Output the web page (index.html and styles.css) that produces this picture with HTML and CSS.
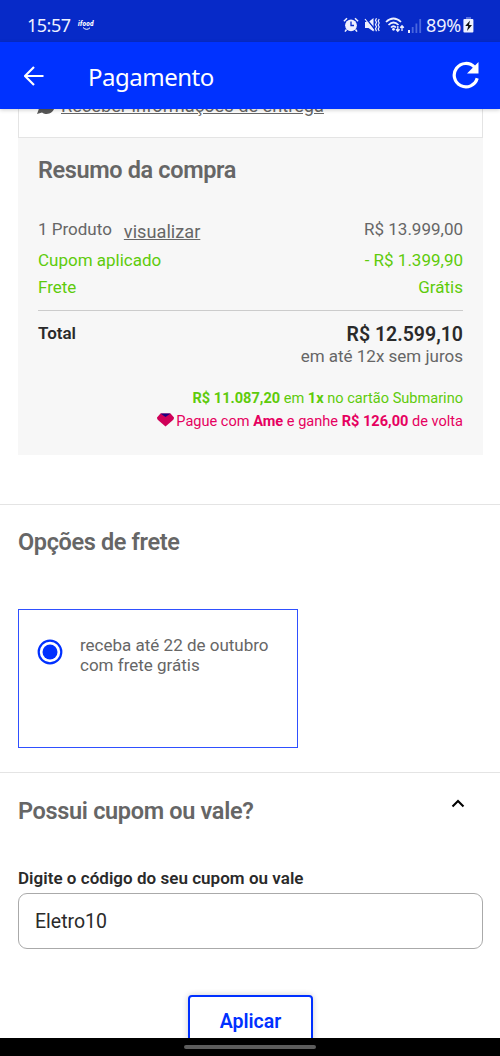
FILE: index.html
```html
<!DOCTYPE html>
<html lang="pt-BR">
<head>
<meta charset="utf-8">
<title>Pagamento</title>
<link rel="stylesheet" href="styles.css">
</head>
<body>
<div class="phone">
  <div class="status">
    <span class="clock">15:57</span>
    <span class="ifood"><span>ifood</span>
      <svg width="10" height="4" viewBox="0 0 10 4"><path d="M1 .5Q4.500 4 8 .8" fill="none" stroke="#fff" stroke-width="1"/></svg>
    </span>
    <div class="status-icons">
      <svg width="16" height="16" viewBox="0 0 16 16"><circle cx="8" cy="8.300" r="5.900" fill="#eef0ff"/><path d="M.9 4.300 4 1.300M15.100 4.300 12 1.300M3.500 12.500 2 14.600M12.500 12.500 14 14.600" stroke="#eef0ff" stroke-width="1.500"/><path d="M8 4.500v4h3" fill="none" stroke="#072ac8" stroke-width="1.300"/></svg>
      <svg width="16" height="16" viewBox="0 0 16 16"><path d="M1 5h3.500L9.500 1v13.500L4.500 11H1z" fill="#eef0ff"/><path d="M2 1.500 10.500 12" stroke="#072ac8" stroke-width="1.500"/><path d="M1 2 10 13.500" stroke="#eef0ff" stroke-width="1.200"/><path d="M12.500 1.200l-1 2 1 2-1 2.500 1 2-1 2 1 2.500M15.200 2l-1 2 1 2-1 2 1 2-1 2 1 2" fill="none" stroke="#eef0ff" stroke-width="1.200"/></svg>
      <svg class="wifi" width="20" height="16" viewBox="0 0 20 16"><path d="M1 5Q8.500-2 16 5M3.500 8Q8.500 3 13.500 8M6 10.500Q8.500 8 11 10.500" fill="none" stroke="#eef0ff" stroke-width="1.700"/><circle cx="8.500" cy="12.300" r="1.400" fill="#eef0ff"/><path d="M12.800 9v5M11 12.200l1.800 2 1.800-2M17 14V9M15.200 10.800 17 8.800l1.800 2" fill="none" stroke="#eef0ff" stroke-width="1.300"/></svg>
      <svg class="signal" width="14" height="14" viewBox="0 0 14 14"><path d="M0 11h2v3H0z" fill="#eef0ff"/><path d="M3.800 8h1.800v6H3.800zM7.500 4.500h1.800V14H7.500zM11.300 0h1.800v14h-1.800z" fill="#4a67de"/></svg>
      <span class="percent">89%</span>
      <svg width="11" height="16" viewBox="0 0 11 16"><path d="M3 0h5v2H3z" fill="#5872df"/><rect x=".4" y="2" width="10" height="13.500" rx="1" fill="#eef0ff"/><path d="M7 3.500 2.200 9h3L4 14 9 8H6z" fill="#111"/></svg>
    </div>
  </div>
  <header class="header">
    <svg width="20" height="20" viewBox="0 0 20 20"><path d="M19.500 10H1.500M10 1 1 10l9 9" fill="none" stroke="#fff" stroke-width="2.200"/></svg>
    <h1>Pagamento</h1>
    <svg class="reload" width="28" height="28" viewBox="0 0 28 28"><path d="M22.500 6.200A11.700 11.700 0 1 0 25.200 17.300" fill="none" stroke="#fff" stroke-width="3.200"/><path d="M26.500 1v11.500H15z" fill="#fff"/></svg>
  </header>
  <main class="content">
    <div class="delivery">
      <svg width="18" height="18" viewBox="0 0 18 18"><path d="M9.500 1A8 8 0 1 1 5 15.500L0 17l1.700-4.600A8 8 0 0 1 9.500 1z" fill="#585858"/><path d="M6 5c0 4 3.500 7 7 7l1-2-2.500-1-1 1C9 9.300 8 8 7.800 7l.8-1L8 4z" fill="#fff"/></svg>
      <a>Receber informações de entrega</a>
    </div>
    <section class="summary">
      <h2>Resumo da compra</h2>
      <div class="row products"><span>1 Produto</span><a>visualizar</a><span class="amount">R$ 13.999,00</span></div>
      <div class="row green coupon"><span>Cupom aplicado</span><span class="amount">- R$ 1.399,90</span></div>
      <div class="row green shipping"><span>Frete</span><span class="amount">Grátis</span></div>
      <div class="row total"><strong class="total-label">Total</strong><strong class="amount price">R$ 12.599,10</strong></div>
      <p class="installments">em até 12x sem juros</p>
      <p class="card-offer"><b>R$ 11.087,20</b> em <b>1x</b> no cartão Submarino</p>
      <p class="ame"><svg width="17" height="14" viewBox="0 0 17 14"><path d="M3.500 .5h10L17 4.500q0 1.500-1 2.500L8.500 13.500 1 7Q0 6 0 4.500z" fill="#cf0058"/><path d="M3.500 .5h10L8.500 4z" fill="#180080"/></svg><span>Pague com <b>Ame</b> e ganhe <b>R$ 126,00</b> de volta</span></p>
    </section>
    <section class="freight">
      <h2>Opções de frete</h2>
      <div class="option">
        <svg width="26" height="26" viewBox="0 0 26 26"><circle cx="13" cy="13" r="11.300" fill="none" stroke="#0030ff" stroke-width="2.200"/><circle cx="13" cy="13" r="7.500" fill="#0030ff"/></svg>
        <p><span class="eta">receba até 22 de outubro</span><br><span class="free">com frete grátis</span></p>
      </div>
    </section>
    <section class="voucher">
      <div class="voucher-head"><h2>Possui cupom ou vale?</h2>
        <svg width="14" height="9" viewBox="0 0 14 9"><path d="M1.500 7.500 7 2l5.500 5.500" fill="none" stroke="#000" stroke-width="2.100"/></svg></div>
      <label for="code">Digite o código do seu cupom ou vale</label>
      <input id="code" type="text" value="Eletro10">
      <button type="button">Aplicar</button>
    </section>
  </main>
  <div class="navbar"><div class="handle"></div></div>
</div>
</body>
</html>
```
FILE: styles.css
```css
* { box-sizing: border-box; }
body { margin: 0; font-family: Roboto, sans-serif; color: #666; background: #fff; }
h1, h2, p { margin: 0; }
svg { display: block; flex: none; }
.phone { width: 500px; height: 1056px; display: flex; flex-direction: column; overflow: hidden; }
.status { height: 42px; flex: none; background: #072ac8; color: #eef0ff; display: flex; padding: 16px 26px 0 27px; }
.clock { font: 18px/20px "Noto Sans", sans-serif; letter-spacing: -.5px; width: 51px; margin-top: -1px; white-space: nowrap; }
.ifood { font: italic 900 6.500px/7px Roboto, sans-serif; letter-spacing: .2px; color: #fff; padding-top: 5px; }
.ifood span { display: block; }
.ifood svg { margin: -1px 0 0 4px; }
.status-icons { margin-left: auto; display: flex; gap: 5px; }
.status-icons svg { margin-top: 1px; }
.status-icons .signal { margin: 3px 0 0 -2px; }
.percent { font: 18px/20px "Noto Sans", sans-serif; letter-spacing: -.2px; margin: -1px 0 0 -1px; }
.status-icons .percent + svg { margin-left: -3px; }
.status-icons .wifi { margin-right: 0; }
.header { height: 67px; flex: none; background: #0032ff; color: #fff; display: flex; align-items: center; padding: 1px 20px 0 24px; box-shadow: 0 1px 4px rgba(0,0,0,.2); z-index: 1; }
.header h1 { font: 400 24px/32px "Noto Sans", sans-serif; letter-spacing: -.5px; margin-left: 44px; padding-top: 1px; }
.reload { margin: -2px 0 0 auto; }
.content { height: 929px; flex: none; overflow: hidden; }
.delivery { margin: -20px 17px 0 18px; height: 49px; border: 1px solid #e4e4e4; display: flex; gap: 6px; padding: 7px 0 0 18px; }
.delivery a { font-size: 18.200px; line-height: 18px; text-decoration: underline; }
.summary { margin: 0 17px 0 18px; height: 317px; background: #f7f7f7; padding: 17px 20px 0; }
h2 { font-size: 23.500px; line-height: 30px; font-weight: 600; letter-spacing: -.37px; }
.row { display: flex; font-size: 17px; line-height: 20px; }
.row a { font-size: 18.200px; text-decoration: underline; margin: 3px 0 0 12px; }
.amount { margin-left: auto; }
.green { color: #5ecb0b; }
.products { margin-top: 34px; height: 31px; }
.coupon { height: 27px; }
.shipping { height: 34px; border-bottom: 1px solid #ccc; }
.total { color: #2a2a2a; height: 35px; padding-top: 13px; }
.total strong { font-weight: 600; }
.total .total-label { margin-top: -1px; }
.total .price { font-size: 19.500px; line-height: 22px; }
.installments { font-size: 17px; line-height: 20px; text-align: right; }
.card-offer { font-size: 14.570px; line-height: 18px; text-align: right; color: #5ecb0b; margin-top: 23px; }
.ame { font-size: 14.570px; line-height: 18px; color: #e6005f; margin-top: 5px; display: flex; justify-content: flex-end; gap: 2px; }
.ame svg { margin-top: 1px; }
.freight { margin-top: 49px; height: 268px; border-top: 1px solid #e4e4e4; padding: 22px 18px 0; }
.option { width: 280px; height: 139px; margin-top: 52px; border: 1px solid #2f50ff; display: flex; gap: 17px; padding: 25px 0 0 18px; }
.option svg { margin-top: 4px; }
.option p { font-size: 17px; line-height: 20px; }
.voucher { border-top: 1px solid #e4e4e4; padding: 23px 17px 0 18px; height: 290px; }
.voucher-head { display: flex; justify-content: space-between; padding-right: 18px; }
.voucher-head h2 { letter-spacing: -.33px; }
.voucher-head svg { margin-top: 3px; }
label { display: block; color: #2a2a2a; font-size: 17px; letter-spacing: .03px; line-height: 20px; font-weight: 600; margin-top: 42px; }
input { display: block; width: 465px; height: 56px; border: 1px solid #aaa; border-radius: 9px; margin-top: 5px; padding: 0 16px; font: 19.500px Roboto, sans-serif; color: #2a2a2a; background: #fff; }
button { display: block; width: 125px; height: 52px; margin: 46px auto 0; border: 2px solid #0030ff; border-radius: 4px; background: #fff; color: #0030ff; font: 600 19.500px Roboto, sans-serif; box-shadow: 0 0 6px rgba(0,0,0,.2); }
.navbar { height: 18px; flex: none; background: #000; padding-top: 7px; z-index: 1; }
.handle { width: 132px; height: 4px; margin: 0 auto; border-radius: 2px; background: #5c5c5c; }
```
